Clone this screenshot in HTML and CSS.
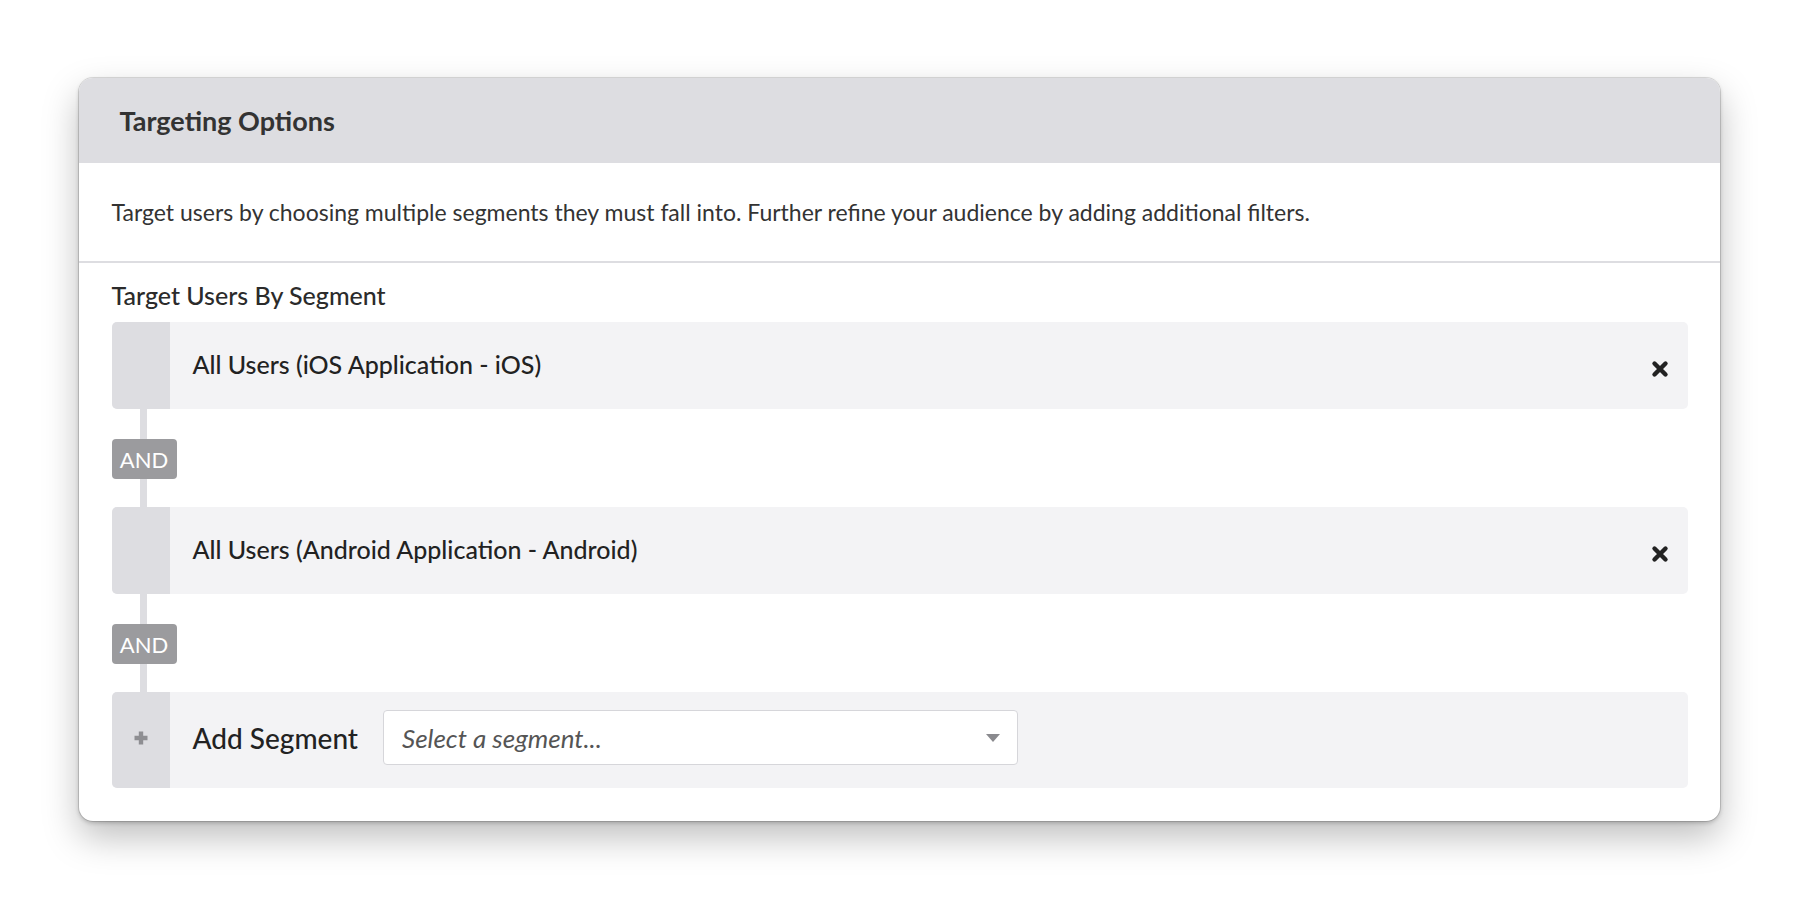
FILE: index.html
```html
<!DOCTYPE html>
<html>
<head>
  <meta charset="utf-8">
  <link rel="stylesheet" href="styles.css">
</head>
<body>

  <div class="card">
    <div class="card-header">Targeting Options</div>

    <div class="card-desc">
      Target users by choosing multiple segments they must fall into. Further refine your audience by adding additional filters.
    </div>

    <div class="segments">
      <div class="segments-label">Target Users By Segment</div>

      <div class="segment">
        <div class="segment-handle"></div>
        <div class="segment-name">All Users (iOS Application - iOS)</div>
        <button class="segment-remove" type="button" title="Remove">
          <svg width="18" height="18" viewBox="0 0 18 18">
            <path d="M3.5 3.5 L14.5 14.5 M14.5 3.5 L3.5 14.5" stroke="#222" stroke-width="4.4" stroke-linecap="round" fill="none"/>
          </svg>
        </button>
      </div>

      <div class="joiner">
        <div class="joiner-line top"></div>
        <span class="joiner-badge">AND</span>
        <div class="joiner-line bottom"></div>
      </div>

      <div class="segment">
        <div class="segment-handle"></div>
        <div class="segment-name">All Users (Android Application - Android)</div>
        <button class="segment-remove" type="button" title="Remove">
          <svg width="18" height="18" viewBox="0 0 18 18">
            <path d="M3.5 3.5 L14.5 14.5 M14.5 3.5 L3.5 14.5" stroke="#222" stroke-width="4.4" stroke-linecap="round" fill="none"/>
          </svg>
        </button>
      </div>

      <div class="joiner">
        <div class="joiner-line top"></div>
        <span class="joiner-badge">AND</span>
        <div class="joiner-line bottom"></div>
      </div>

      <div class="segment segment-add">
        <div class="segment-handle">
          <svg width="16" height="16" viewBox="0 0 16 16">
            <path d="M8 1.5 V14.5 M1.5 8 H14.5" stroke="#8e8e92" stroke-width="4.4" fill="none"/>
          </svg>
        </div>
        <div class="segment-name">Add Segment</div>
        <div class="segment-select">
          <span class="placeholder">Select a segment...</span>
          <span class="caret"></span>
        </div>
      </div>
    </div>
  </div>

</body>
</html>
```

FILE: styles.css
```css
body {
  margin: 0;
  padding-bottom: 80px;
  background: #fff;
  color: #333;
  font-family: Lato, "Noto Sans", sans-serif;
}

/* Outer panel */
.card {
  width: 1641px;
  margin: 78px auto 0;
  background: #fff;
  border-radius: 14px;
  overflow: hidden;
  box-shadow: 0 0 0 1px rgba(0, 0, 0, 0.12),
    0 2px 4px rgba(0, 0, 0, 0.2),
    0 16px 36px rgba(0, 0, 0, 0.26);
}

.card-header {
  height: 85px;
  display: flex;
  align-items: center;
  padding-left: 41px;
  background: #dddde1;
  font-size: 27px;
  font-weight: 700;
  color: #333;
}

.card-desc {
  height: 98px;
  display: flex;
  align-items: center;
  padding: 0 33px;
  border-bottom: 2px solid #dddde1;
  font-size: 23px;
}

.segments {
  padding: 0 32px 33px 33px;
}

.segments-label {
  margin: 19px 0 14px;
  line-height: 26px;
  font-size: 25px;
  font-weight: 500;
  color: #2b2b2b;
}

/* One segment row */
.segment {
  display: flex;
  align-items: center;
  height: 87px;
  background: #f3f3f5;
  border-radius: 5px;
  overflow: hidden;
}

.segment-handle {
  align-self: stretch;
  width: 58px;
  flex: none;
  display: flex;
  align-items: center;
  justify-content: center;
  background: #dddde1;
}

.segment-name {
  padding-left: 23px;
  padding-bottom: 4px;
  font-size: 25px;
  font-weight: 500;
  color: #222;
}

.segment-remove {
  margin-left: auto;
  margin-right: 19px;
  margin-top: 6px;
  padding: 0;
  border: 0;
  background: none;
  display: flex;
}

.segment-add {
  height: 96px;
  box-sizing: border-box;
  padding-bottom: 5px;
}

.segment-add .segment-handle {
  margin-bottom: -5px;
  padding-bottom: 5px;
}

.segment-add .segment-name {
  padding-bottom: 0;
  font-size: 28px;
}

.segment-select {
  width: 635px;
  height: 55px;
  margin-left: 25px;
  box-sizing: border-box;
  display: flex;
  align-items: center;
  justify-content: space-between;
  padding: 0 17px 0 18px;
  background: #fff;
  border: 1px solid #d6d6da;
  border-radius: 4px;
}

.placeholder {
  font-style: italic;
  font-size: 26px;
  color: #555;
}

.caret {
  width: 0;
  height: 0;
  border-left: 7px solid transparent;
  border-right: 7px solid transparent;
  border-top: 8px solid #8a8a8e;
}

/* AND connector between rows */
.joiner {
  display: flex;
  flex-direction: column;
  width: 65px;
}

.joiner-line {
  width: 7px;
  margin-left: 28px;
  background: #dddde1;
}

.joiner-line.top {
  height: 30px;
}

.joiner-line.bottom {
  height: 28px;
}

.joiner-badge {
  height: 40px;
  display: flex;
  align-items: center;
  justify-content: center;
  background: #9b9b9e;
  color: #fff;
  font-size: 22px;
  border-radius: 4px;
}
```
